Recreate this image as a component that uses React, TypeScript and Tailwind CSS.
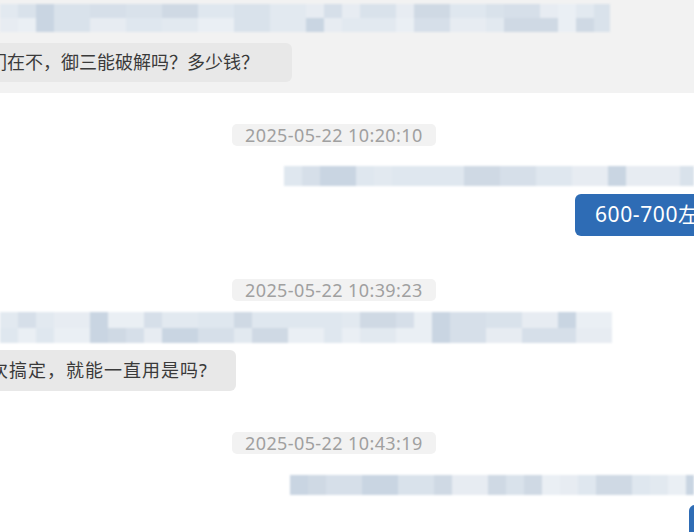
import React from "react";

const palette = [
  "#dfe7ef",
  "#d6dfe9",
  "#e7ecf2",
  "#cfd9e4",
  "#eaeff4",
  "#d9e2eb",
  "#c9d5e2",
  "#e2e9f0",
];

function rng(seed: number) {
  let s = seed;
  return () => {
    s = (s * 16807) % 2147483647;
    return (s - 1) / 2147483646;
  };
}

type Col = { w: number; colors: string[] };

function makeBlocks(seed: number, width: number, rows: number, cell: number): Col[] {
  const r = rng(seed);
  const cols: Col[] = [];
  let x = 0;
  while (x < width) {
    const w = Math.min(cell * (1 + Math.floor(r() * 2)), width - x);
    cols.push({
      w,
      colors: Array.from({ length: rows }, () => palette[Math.floor(r() * palette.length)]),
    });
    x += w;
  }
  return cols;
}

function Mosaic({ cols, className }: { cols: Col[]; className: string }) {
  return (
    <div className={"flex blur-[0.8px] " + className}>
      {cols.map((c, i) => (
        <div key={i} className="flex flex-col" style={{ width: c.w }}>
          {c.colors.map((col, j) => (
            <div key={j} className="flex-1" style={{ background: col }} />
          ))}
        </div>
      ))}
    </div>
  );
}

const bar1 = makeBlocks(7, 610, 2, 18);
const bar2 = makeBlocks(31, 410, 1, 18);
const bar3 = makeBlocks(53, 612, 2, 18);
const bar4 = makeBlocks(97, 404, 1, 18);

function Stamp({ text, className }: { text: string; className: string }) {
  return (
    <div
      className={
        "ml-[232px] w-fit rounded-[5px] bg-[#f2f2f2] px-[13px] text-[18px] leading-[22px] tracking-[0.4px] text-[#a0a0a0] " +
        className
      }
    >
      {text}
    </div>
  );
}

export default function App() {
  return (
    <div className="h-[532px] w-[694px] overflow-hidden bg-white font-['Noto_Sans','Noto_Sans_CJK_SC',sans-serif]">
      <div className="bg-[#f2f2f2] pb-[11px] pt-[4px]">
        <Mosaic cols={bar1} className="h-[28px] w-[610px]" />
        <div className="mt-[11px] flex">
          <div className="ml-[-41px] whitespace-nowrap rounded-[6px] bg-[#e8e8e8] py-[7px] pl-[12px] pr-[33px] text-[18px] leading-[25px] text-[#3a3a3a]">
            你们在不，御三能破解吗？多少钱？
          </div>
        </div>
      </div>

      <Stamp text="2025-05-22 10:20:10" className="mt-[31px]" />
      <Mosaic cols={bar2} className="ml-[284px] mt-[20px] h-[20px] w-[410px]" />
      <div className="ml-[575px] mt-[8px] flex h-[42px] w-[200px] items-center whitespace-nowrap rounded-[6px] bg-[#2e6cb5] pl-[20px] text-[21px] tracking-[0.6px] text-white">
        600-700左右
      </div>

      <Stamp text="2025-05-22 10:39:23" className="mt-[43px]" />
      <Mosaic cols={bar3} className="mt-[11px] h-[31px] w-[612px]" />
      <div className="mt-[7px] flex">
        <div className="ml-[-41px] whitespace-nowrap rounded-[6px] bg-[#e8e8e8] py-[8px] pl-[12px] pr-[28px] text-[18px] leading-[25px] tracking-[1px] text-[#3a3a3a]">
          一次搞定，就能一直用是吗?
        </div>
      </div>

      <Stamp text="2025-05-22 10:43:19" className="mt-[41px]" />
      <Mosaic cols={bar4} className="ml-[290px] mt-[21px] h-[20px] w-[404px]" />
      <div className="ml-[689px] mt-[10px] h-[42px] w-[100px] rounded-[6px] bg-[#2e6cb5]" />
    </div>
  );
}
